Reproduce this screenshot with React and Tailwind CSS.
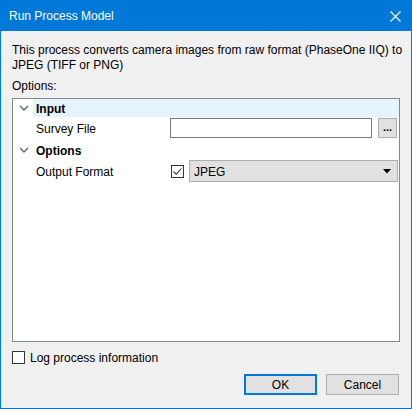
import React from 'react';

const font = { fontFamily: '"Liberation Sans", Arial, sans-serif' };

const Chevron = () => (
  <svg width="10" height="6" viewBox="0 0 10 6" className="shrink-0">
    <path d="M1 1 L5 5 L9 1" fill="none" stroke="#606060" strokeWidth="1.3" />
  </svg>
);

const Check = () => (
  <svg width="11" height="11" viewBox="0 0 11 11">
    <path d="M1.5 5.5 L4.2 8.2 L9.5 2.5" fill="none" stroke="#333" strokeWidth="1.1" />
  </svg>
);

export default function App() {
  return (
    <div
      className="w-[412px] h-[409px] border border-[#0078d7] bg-[#f0f0f0] flex flex-col text-[12px] text-black"
      style={font}
    >
      {/* title bar */}
      <div className="h-[30px] bg-[#0078d7] flex items-center justify-between pl-[8px] pr-[10px] text-white">
        <span className="leading-none">Run Process Model</span>
        <svg width="11" height="11" viewBox="0 0 11 11">
          <path d="M0.5 0.5 L10.5 10.5 M10.5 0.5 L0.5 10.5" stroke="white" strokeWidth="1.2" />
        </svg>
      </div>

      <div className="flex flex-col px-[11px] pt-[12px]">
        <p className="leading-[15px] whitespace-nowrap">
          This process converts camera images from raw format (PhaseOne IIQ) to
          <br />
          JPEG (TIFF or PNG)
        </p>
        <p className="leading-[15px] mt-[6px]">Options:</p>

        {/* property grid */}
        <div className="mt-[4px] h-[244px] border border-[#828790] bg-white flex flex-col">
          <div className="h-[18px] flex items-center">
            <div className="w-[20px] flex justify-center pl-[2px]"><Chevron /></div>
            <div className="flex-1 h-full bg-[#e5f3fb] flex items-center pl-[3px] pt-[1px] font-bold">Input</div>
          </div>
          <div className="h-[22px] flex items-center">
            <div className="w-[157px] pl-[23px] pt-[2px]">Survey File</div>
            <div className="w-[202px] h-[20px] border border-[#7a7a7a] bg-white" />
            <div className="ml-[6px] w-[19px] h-[20px] border border-[#adadad] bg-[#e1e1e1] flex items-center justify-center text-[11px] leading-none pb-[2px] font-bold">
              ...
            </div>
          </div>
          <div className="h-[21px] flex items-center">
            <div className="w-[20px] flex justify-center pl-[2px] pt-[1px]"><Chevron /></div>
            <div className="pl-[3px] pt-[2px] font-bold">Options</div>
          </div>
          <div className="h-[22px] flex items-center">
            <div className="w-[158px] pl-[23px] pt-[2px]">Output Format</div>
            <div className="w-[13px] h-[13px] border border-[#333] bg-white flex items-center justify-center">
              <Check />
            </div>
            <div className="ml-[5px] w-[209px] h-[22px] border border-[#adadad] bg-[#e1e1e1] flex items-center justify-between pl-[4px] pr-[6px]">
              <span className="pt-[1px]">JPEG</span>
              <svg width="8" height="5" viewBox="0 0 8 5">
                <path d="M0 0 H8 L4 4.5 Z" fill="#000" />
              </svg>
            </div>
          </div>
        </div>

        {/* log checkbox */}
        <div className="mt-[9px] flex items-center h-[13px]">
          <div className="w-[13px] h-[13px] border border-[#333] bg-white" />
          <span className="ml-[5px] leading-none pt-[1px]">Log process information</span>
        </div>

        {/* buttons */}
        <div className="mt-[10px] flex justify-end gap-[9px] pr-[1px]">
          <button className="w-[73px] h-[21px] border-2 border-[#0078d7] bg-[#e1e1e1] flex items-center justify-center leading-none">
            OK
          </button>
          <button className="w-[73px] h-[21px] border border-[#adadad] bg-[#e1e1e1] flex items-center justify-center leading-none">
            Cancel
          </button>
        </div>
      </div>
    </div>
  );
}
